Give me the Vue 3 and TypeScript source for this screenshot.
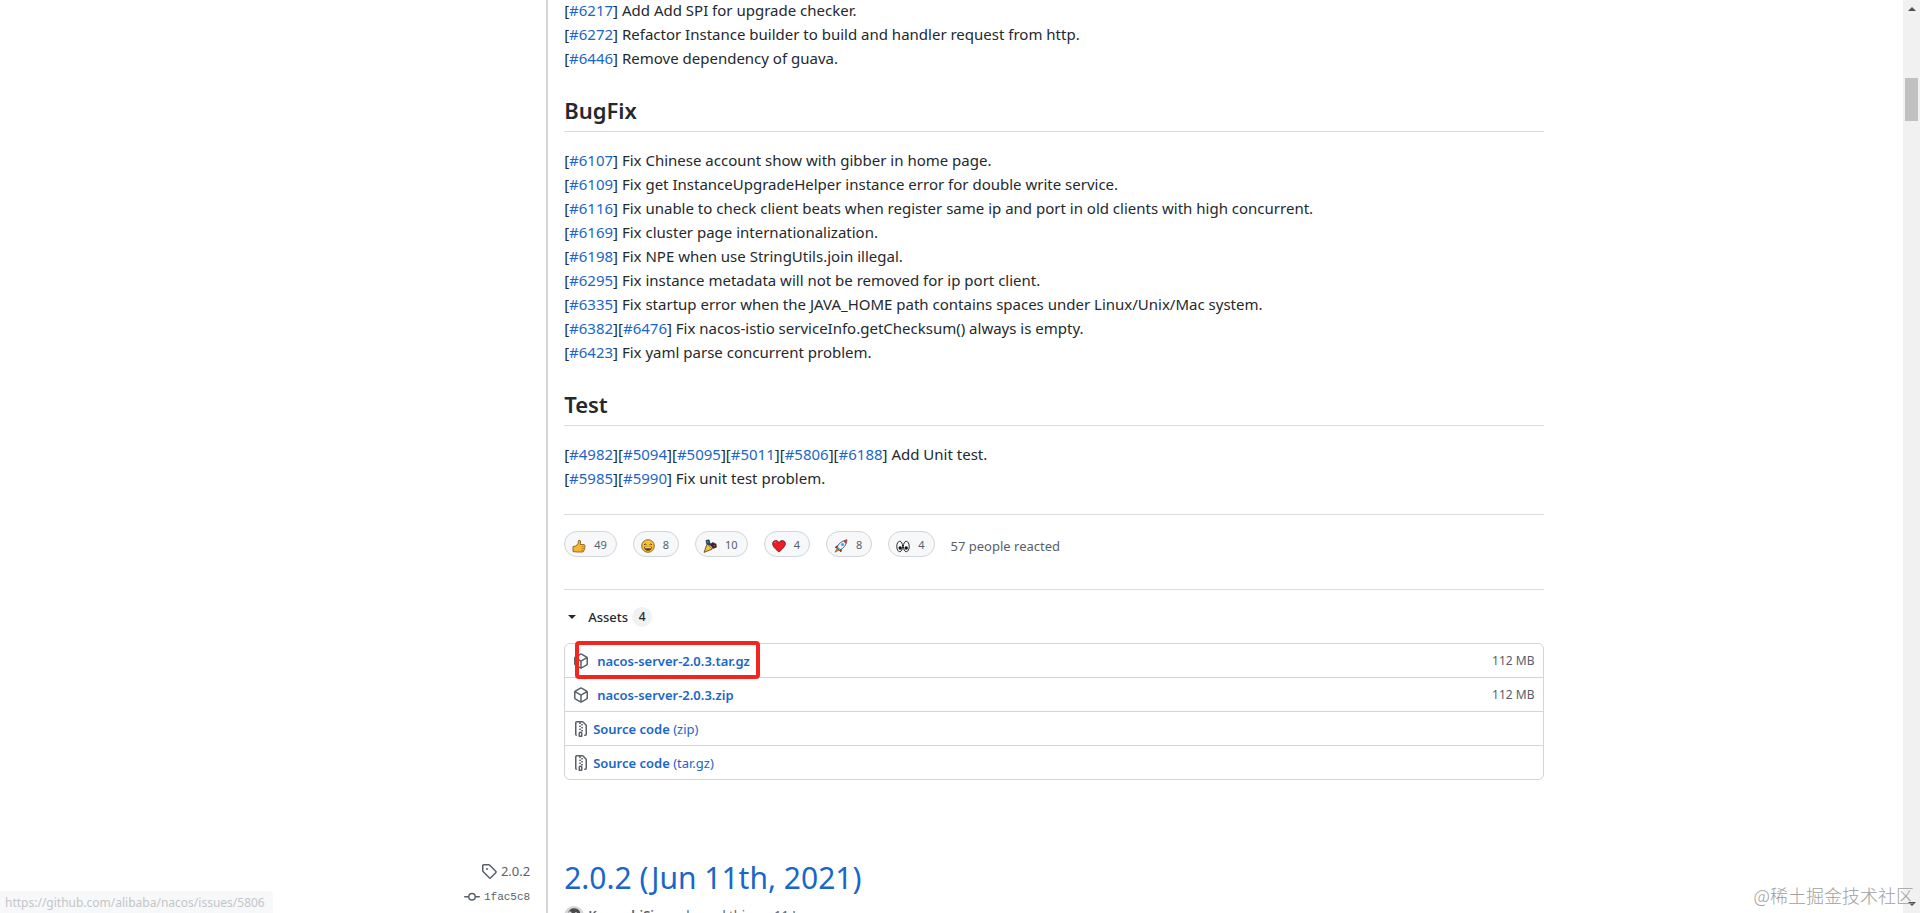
<script setup lang="ts">
interface Note {
  issues: number[]
  text: string
}
interface Reaction {
  kind: string
  label: string
  count: number
}
interface Asset {
  name: string
  format?: string
  size?: string
  marked?: boolean
}

const base = 'https://github.com/alibaba/nacos'

const refactors: Note[] = [
  { issues: [6217], text: 'Add Add SPI for upgrade checker.' },
  { issues: [6272], text: 'Refactor Instance builder to build and handler request from http.' },
  { issues: [6446], text: 'Remove dependency of guava.' },
]

const sections: { title: string; notes: Note[] }[] = [
  {
    title: 'BugFix',
    notes: [
      { issues: [6107], text: 'Fix Chinese account show with gibber in home page.' },
      { issues: [6109], text: 'Fix get InstanceUpgradeHelper instance error for double write service.' },
      { issues: [6116], text: 'Fix unable to check client beats when register same ip and port in old clients with high concurrent.' },
      { issues: [6169], text: 'Fix cluster page internationalization.' },
      { issues: [6198], text: 'Fix NPE when use StringUtils.join illegal.' },
      { issues: [6295], text: 'Fix instance metadata will not be removed for ip port client.' },
      { issues: [6335], text: 'Fix startup error when the JAVA_HOME path contains spaces under Linux/Unix/Mac system.' },
      { issues: [6382, 6476], text: 'Fix nacos-istio serviceInfo.getChecksum() always is empty.' },
      { issues: [6423], text: 'Fix yaml parse concurrent problem.' },
    ],
  },
  {
    title: 'Test',
    notes: [
      { issues: [4982, 5094, 5095, 5011, 5806, 6188], text: 'Add Unit test.' },
      { issues: [5985, 5990], text: 'Fix unit test problem.' },
    ],
  },
]

const reactions: Reaction[] = [
  { kind: 'thumb', label: 'thumbs up', count: 49 },
  { kind: 'laugh', label: 'laugh', count: 8 },
  { kind: 'party', label: 'hooray', count: 10 },
  { kind: 'heart', label: 'heart', count: 4 },
  { kind: 'rocket', label: 'rocket', count: 8 },
  { kind: 'eyes', label: 'eyes', count: 4 },
]

const assets: Asset[] = [
  { name: 'nacos-server-2.0.3.tar.gz', size: '112 MB', marked: true },
  { name: 'nacos-server-2.0.3.zip', size: '112 MB' },
  { name: 'Source code', format: '(zip)' },
  { name: 'Source code', format: '(tar.gz)' },
]
</script>

<template>
  <div class="window">
    <main class="page">
      <div class="container">
        <section class="release">
          <aside class="meta"></aside>
          <div class="body">
            <div class="notes">
              <p v-for="note in refactors" :key="note.text" class="note">
                <template v-for="id in note.issues" :key="id">[<a :href="`${base}/issues/${id}`">#{{ id }}</a>]</template>
                {{ note.text }}
              </p>
            </div>
            <template v-for="section in sections" :key="section.title">
              <h2>{{ section.title }}</h2>
              <div class="notes">
                <p v-for="note in section.notes" :key="note.text" class="note">
                  <template v-for="id in note.issues" :key="id">[<a :href="`${base}/issues/${id}`">#{{ id }}</a>]</template>
                  {{ note.text }}
                </p>
              </div>
            </template>

            <div class="reactions">
              <button v-for="r in reactions" :key="r.kind" type="button" class="pill" :aria-label="`${r.label} ${r.count}`">
                <svg class="emoji" viewBox="0 0 14 14" aria-hidden="true">
                  <template v-if="r.kind === 'thumb'">
                    <path d="M1 7.5 4 7 6 4.5 6.5 1.5Q8.5.5 8.7 3L8.2 5.5H12Q13.4 6 12.8 7.4 13.4 8.5 12.6 9.4 13 10.6 12 11.2 12 12.9 10.4 13H5L1 12.6Z" fill="#f9b62b" stroke="#7a5216" stroke-width=".8" />
                    <path d="M9.5 7.6h3M9.5 9.5h3M9.2 11.3h2.6" stroke="#b9791a" stroke-width=".7" />
                  </template>
                  <template v-else-if="r.kind === 'laugh'">
                    <circle cx="7" cy="7" r="6.3" fill="#fcc22f" stroke="#6e4e12" stroke-width=".8" />
                    <path d="M3 5.8Q4.2 4.2 5.6 5.8M8.4 5.8Q9.8 4.2 11 5.8" fill="none" stroke="#4b3513" stroke-width=".9" />
                    <path d="M3 7.8h8Q10.4 11.8 7 11.8T3 7.8Z" fill="#5c3410" />
                    <path d="M4 8.2h6v1H4Z" fill="#fff" />
                  </template>
                  <template v-else-if="r.kind === 'party'">
                    <path d="M4.2 4.7 9.4 10 1 13.4Z" fill="#f9c03a" stroke="#4f3a18" stroke-width=".8" />
                    <path d="M3 1.5 6 .8 7 4 9 6.5 6.3 6 3.5 4.5Z" fill="#1d5266" stroke="#17202d" stroke-width=".6" />
                    <path d="M7.5 5.5 9.5 3.5 13 5 13.4 8.2 10 9.4Z" fill="#4a2133" stroke="#201524" stroke-width=".6" />
                    <circle cx="4.8" cy="3" r=".8" fill="#23a8c4" />
                    <circle cx="11.4" cy="6.8" r=".8" fill="#d84962" />
                  </template>
                  <template v-else-if="r.kind === 'heart'">
                    <path d="M7 13Q.5 8 .6 4.6C.8 1.2 5.3.5 7 3.6 8.7.5 13.2 1.2 13.4 4.6 13.5 8 7 13 7 13Z" fill="#ed1c24" stroke="#5c1117" stroke-width=".8" />
                    <path d="M2.5 4Q3 2.8 4.3 3" fill="none" stroke="#ff8c8f" stroke-width=".8" />
                  </template>
                  <template v-else-if="r.kind === 'rocket'">
                    <path d="M3.5 6.5 1 8.5 3 9ZM7.5 10.5 7 13 5.3 11Z" fill="#b52632" stroke="#4b2530" stroke-width=".6" />
                    <path d="M3 9.3 1 13.2 5 11.2Z" fill="#f08a24" stroke="#8a4b1c" stroke-width=".6" />
                    <path d="M3 9Q4.6 2.5 13 .8 12.3 8.5 5.2 11.3Z" fill="#e8f4fa" stroke="#304655" stroke-width=".8" />
                    <path d="M9.2 2 13 .8 12 5Z" fill="#dd2e44" />
                    <circle cx="8.5" cy="5.5" r="1.5" fill="#39a4dc" />
                    <path d="M4 8.6 5.8 10.5" stroke="#3ba0d0" stroke-width="1.2" />
                  </template>
                  <template v-else>
                    <ellipse cx="3.7" cy="7.5" rx="2.9" ry="5.2" fill="#fff" stroke="#222" stroke-width="1" />
                    <ellipse cx="10.3" cy="7.5" rx="2.9" ry="5.2" fill="#fff" stroke="#222" stroke-width="1" />
                    <circle cx="4.2" cy="9" r="1.7" fill="#111" />
                    <circle cx="10.2" cy="9" r="1.7" fill="#111" />
                  </template>
                </svg>
                <span class="count">{{ r.count }}</span>
              </button>
              <span class="reacted">57 people reacted</span>
            </div>

            <details class="assets" open>
              <summary>
                <span class="caret"></span>
                <span class="assets-title">Assets</span>
                <span class="counter">4</span>
              </summary>
              <ul class="box">
                <li v-for="asset in assets" :key="asset.name + asset.format" :class="{ marked: asset.marked }">
                  <svg v-if="asset.size" class="icon" viewBox="0 0 16 16" aria-hidden="true">
                    <path fill-rule="evenodd" d="M8.878.392a1.75 1.75 0 00-1.756 0l-5.25 3.045A1.75 1.75 0 001 4.951v6.098c0 .624.332 1.2.872 1.514l5.25 3.045a1.75 1.75 0 001.756 0l5.25-3.045c.54-.313.872-.89.872-1.514V4.951c0-.624-.332-1.2-.872-1.514L8.878.392zM7.875 1.69a.25.25 0 01.25 0l4.63 2.685L8 7.133 3.245 4.375l4.63-2.685zM2.5 5.677v5.372c0 .09.047.171.125.216l4.625 2.683V8.432L2.5 5.677zm6.25 8.271l4.625-2.683a.25.25 0 00.125-.216V5.677L8.75 8.432v5.516z" />
                  </svg>
                  <svg v-else class="icon" viewBox="0 0 16 16" aria-hidden="true">
                    <path fill-rule="evenodd" d="M3.5 1.75a.25.25 0 01.25-.25h3a.75.75 0 000 1.5h.5a.75.75 0 000-1.5h2.086a.25.25 0 01.177.073l2.914 2.914a.25.25 0 01.073.177v8.586a.25.25 0 01-.25.25h-.5a.75.75 0 000 1.5h.5A1.75 1.75 0 0014 13.25V4.664c0-.464-.184-.909-.513-1.237L10.573.513A1.75 1.75 0 009.336 0H3.75A1.75 1.75 0 002 1.75v11.5c0 .649.353 1.214.874 1.515a.75.75 0 10.752-1.298.25.25 0 01-.126-.217V1.75zM8.75 3a.75.75 0 000 1.5h.5a.75.75 0 000-1.5h-.5zM6 5.25a.75.75 0 01.75-.75h.5a.75.75 0 010 1.5h-.5A.75.75 0 016 5.25zm2 1.5A.75.75 0 018.75 6h.5a.75.75 0 010 1.5h-.5A.75.75 0 018 6.75zm-1.25.75a.75.75 0 000 1.5h.5a.75.75 0 000-1.5h-.5zM8 9.75A.75.75 0 018.75 9h.5a.75.75 0 010 1.5h-.5A.75.75 0 018 9.75zm-.75.75a1.75 1.75 0 00-1.75 1.75v3c0 .414.336.75.75.75h2.5a.75.75 0 00.75-.75v-3a1.75 1.75 0 00-1.75-1.75h-.5zM7 12.25a.25.25 0 01.25-.25h.5a.25.25 0 01.25.25v2.25H7v-2.25z" />
                  </svg>
                  <a :href="`${base}/releases`" :class="{ binary: asset.size }"><b>{{ asset.name }}</b><template v-if="asset.format">&nbsp;{{ asset.format }}</template></a>
                  <small v-if="asset.size">{{ asset.size }}</small>
                </li>
              </ul>
            </details>
          </div>
        </section>

        <section class="release">
          <aside class="meta next">
            <a :href="`${base}/tree/2.0.2`" class="ref">
              <svg viewBox="0 0 16 16" aria-hidden="true">
                <path fill-rule="evenodd" d="M2.5 7.775V2.75a.25.25 0 01.25-.25h5.025a.25.25 0 01.177.073l6.25 6.25a.25.25 0 010 .354l-5.025 5.025a.25.25 0 01-.354 0l-6.25-6.25a.25.25 0 01-.073-.177zm-1.5 0V2.75C1 1.784 1.784 1 2.75 1h5.025c.464 0 .91.184 1.238.513l6.25 6.25a1.75 1.75 0 010 2.474l-5.026 5.026a1.75 1.75 0 01-2.474 0l-6.25-6.25A1.75 1.75 0 011 7.775zM6 5a1 1 0 100 2 1 1 0 000-2z" />
              </svg>
              <span>2.0.2</span>
            </a>
            <a :href="`${base}/commit/1fac5c8`" class="ref">
              <svg viewBox="0 0 16 16" aria-hidden="true">
                <path fill-rule="evenodd" d="M10.5 7.75a2.5 2.5 0 11-5 0 2.5 2.5 0 015 0zm1.43.75a4.002 4.002 0 01-7.86 0H.75a.75.75 0 110-1.5h3.32a4.001 4.001 0 017.86 0h3.32a.75.75 0 110 1.5h-3.32z" />
              </svg>
              <code>1fac5c8</code>
            </a>
          </aside>
          <div class="body next">
            <h1><a :href="`${base}/releases/tag/2.0.2`">2.0.2 (Jun 11th, 2021)</a></h1>
            <p class="author">
              <svg class="avatar" viewBox="0 0 20 20" aria-hidden="true">
                <circle cx="10" cy="10" r="10" fill="#d5d6d8" />
                <path d="M4 7Q6 1 12 2.5 17 4 16 9L12 6 9 8 6 5Z" fill="#4c4c4f" />
                <path d="M5 10Q8 5 11 9T15 11L13 16H7Z" fill="#85868a" />
              </svg>
              <span><b>KomachiSion</b> released this on 11 Jun</span>
            </p>
          </div>
        </section>
      </div>
    </main>

    <div class="scrollbar" aria-hidden="true">
      <span class="arrow up"></span>
      <span class="thumb"></span>
      <span class="arrow down"></span>
    </div>

    <div class="status">https://github.com/alibaba/nacos/issues/5806</div>
    <div class="watermark">@稀土掘金技术社区</div>
  </div>
</template>

<style>
body {
  background: #fff;
}
</style>

<style scoped>
*,
*::after {
  box-sizing: border-box;
}
.window {
  position: relative;
  display: flex;
  height: 100vh;
  overflow: hidden;
  font: 13px/20px "Noto Sans", "Noto Sans CJK SC", sans-serif;
  color: #24292e;
}
.page {
  flex: 1;
  min-width: 0;
  overflow: hidden;
}
.container {
  max-width: 1280px;
  margin: -2px auto 0;
  padding: 0 32px;
}
.release {
  display: grid;
  grid-template-columns: minmax(0, 1fr) minmax(0, 5fr);
}
.body {
  border-left: 2px solid #d1d5da;
  padding: 0 16px 62px;
}
.body.next {
  padding: 16px 16px 32px;
}
a {
  color: #1b66c9;
  text-decoration: none;
}
p,
h1,
h2,
ul {
  margin: 0;
}
.note {
  font-size: 15px;
  line-height: 24px;
}
h2 {
  margin: 24px 0 16px;
  padding-bottom: 5px;
  border-bottom: 1px solid #d8dbdf;
  font-size: 22px;
  line-height: 32px;
  font-weight: 600;
}
.reactions {
  display: flex;
  align-items: center;
  gap: 16px;
  margin-top: 24px;
  padding: 16px 0 32px;
  border-top: 1px solid #d8dbdf;
  border-bottom: 1px solid #d8dbdf;
}
.pill {
  display: flex;
  align-items: center;
  gap: 8px;
  height: 26px;
  padding: 0 9px 0 7px;
  border: 1px solid #d1d5da;
  border-radius: 13px;
  background: #f6f8fa;
  color: #586069;
  font: 11px/18px "Noto Sans", sans-serif;
}
.count {
  padding-top: 2px;
}
.emoji {
  width: 14px;
  height: 14px;
  margin-top: 4px;
}
.reacted {
  padding-top: 4px;
  color: #586069;
}
summary {
  display: flex;
  align-items: center;
  padding: 17px 0 16px 4px;
  list-style: none;
}
.caret {
  border: 4px solid transparent;
  border-top-color: #24292e;
  border-bottom-width: 0;
  margin-right: 12px;
}
.assets-title {
  font-weight: 500;
}
.counter {
  min-width: 20px;
  margin-left: 4px;
  padding: 0 6px;
  border-radius: 10px;
  background: #eff1f3;
  font-size: 12px;
  font-weight: 500;
  text-align: center;
}
.box {
  padding: 0;
  border: 1px solid #d1d5da;
  border-radius: 6px;
  list-style: none;
}
.box li {
  position: relative;
  display: flex;
  align-items: center;
  min-height: 33px;
  padding: 0 8px;
}
.box li + li {
  min-height: 34px;
  border-top: 1px solid #d1d5da;
}
.marked::after {
  content: "";
  position: absolute;
  left: 10px;
  top: -3px;
  width: 185px;
  height: 38px;
  border: 4px solid #f3261f;
  border-radius: 4px;
  z-index: 1;
  pointer-events: none;
}
.icon {
  width: 16px;
  height: 16px;
  fill: #586069;
}
.box a {
  margin-left: 4px;
}
.box a.binary {
  margin-left: 8px;
}
.box b {
  font-weight: 600;
}
.box small {
  margin-left: auto;
  color: #586069;
  font-size: 12px;
}
.meta {
  display: flex;
  flex-direction: column;
  align-items: flex-end;
  padding-right: 16px;
}
.meta.next {
  gap: 6px;
  padding-top: 19px;
}
.ref {
  display: flex;
  align-items: center;
  gap: 4px;
  color: #586069;
}
.ref svg {
  width: 16px;
  height: 16px;
  fill: #586069;
}
code {
  font: 11px/20px "Liberation Mono", monospace;
}
h1 {
  font-size: 30px;
  line-height: 40px;
  font-weight: 400;
}
.author {
  display: flex;
  gap: 4px;
  margin-top: 8px;
  color: #586069;
  line-height: 18px;
}
.author b {
  font-weight: 600;
}
.avatar {
  width: 20px;
  height: 20px;
}
.scrollbar {
  display: flex;
  flex-direction: column;
  align-items: center;
  width: 17px;
  padding: 7px 0;
  background: #f1f1f1;
}
.arrow {
  border: 4px solid transparent;
}
.up {
  border-top-width: 0;
  border-bottom-color: #505050;
}
.down {
  margin-top: auto;
  border-bottom-width: 0;
  border-top-color: #505050;
}
.thumb {
  width: 13px;
  height: 43px;
  margin-top: 67px;
  background: #c1c1c1;
}
.status {
  position: absolute;
  left: 0;
  bottom: 0;
  padding: 2px 8px 0 5px;
  border-top-right-radius: 4px;
  background: #f7f8f9;
  color: #c3c6c9;
  font-size: 12px;
}
.watermark {
  position: absolute;
  right: 6px;
  bottom: 5px;
  color: #a0a0a0;
  font: 300 18px/26px "Noto Sans CJK SC", sans-serif;
}
</style>
